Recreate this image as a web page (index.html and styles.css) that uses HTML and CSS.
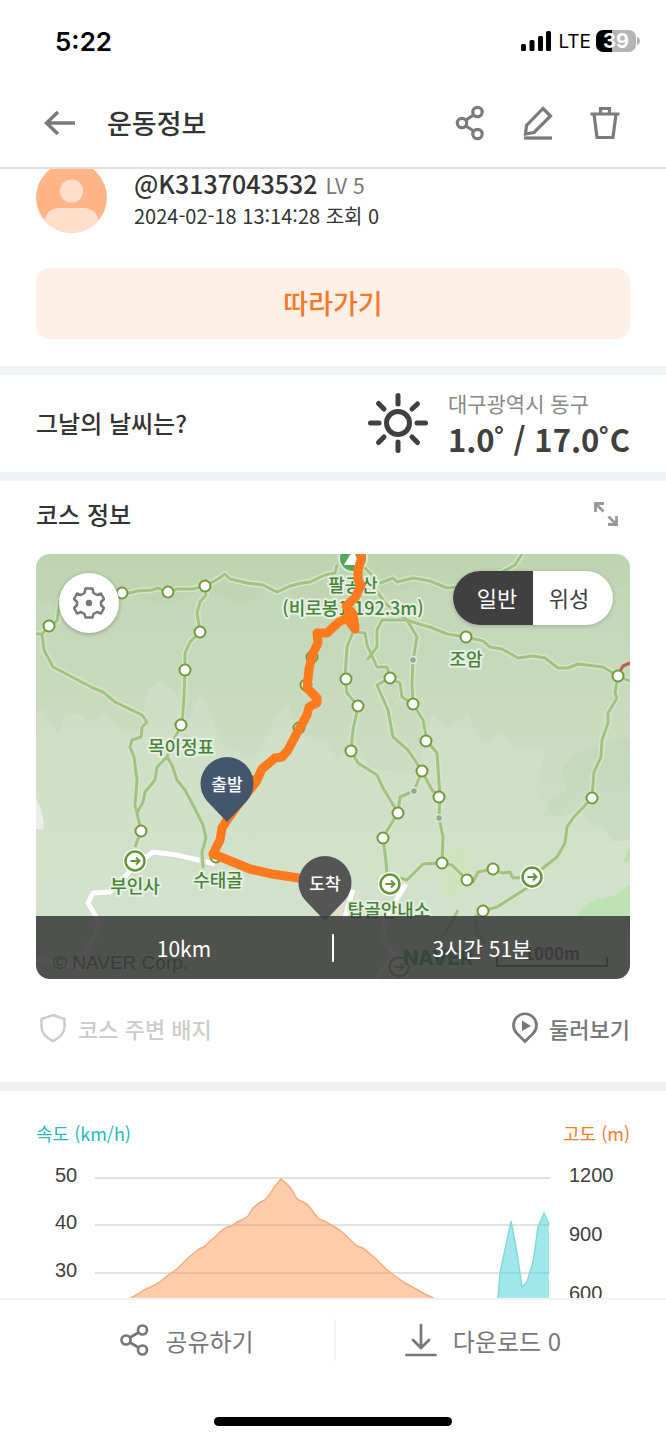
FILE: index.html
```html
<!DOCTYPE html>
<html lang="ko">
<head>
    <meta charset="UTF-8">
    <meta name="viewport" content="width=device-width, initial-scale=1.0">
    <title>운동정보</title>
    <link rel="stylesheet" href="styles.css">
</head>
<body>
    <div class="status-bar">
        <span class="time">5:22</span>
        <div class="status-icons">
            <svg width="31" height="20" viewBox="0 0 31 20">
                <rect x="0" y="13" width="5" height="7" rx="1.5"/>
                <rect x="8.500" y="9" width="5" height="11" rx="1.500"/>
                <rect x="17" y="5" width="5" height="15" rx="1.5"/>
                <rect x="25" y="0" width="5" height="20" rx="1.5"/>
            </svg>
            <span class="network">LTE</span>
            <div class="battery">39</div>
            <svg class="battery-tip" width="3" height="8" viewBox="0 0 3 8"><path d="M0 0C4 1 4 7 0 8Z" fill="#b5b5b5"/></svg>
        </div>
    </div>

    <header class="header">
        <button class="icon-btn" aria-label="뒤로">
            <svg width="32" height="32" viewBox="0 0 32 32"><path d="M14 5L2.500 16L14 27M3 16H31" stroke-width="3.500"/></svg>
        </button>
        <h1>운동정보</h1>
        <div class="header-actions">
            <button class="icon-btn" aria-label="공유">
                <svg width="32" height="36" viewBox="0 0 32 36"><g stroke-width="3.200"><circle cx="7" cy="18" r="4.700"/><circle cx="22.500" cy="7" r="4.700"/><circle cx="22.500" cy="29" r="4.700"/><path d="M11 15L18.500 10M11 21L18.500 26"/></g></svg>
            </button>
            <button class="icon-btn" aria-label="수정">
                <svg width="32" height="36" viewBox="0 0 32 36"><g stroke-width="3.200"><path d="M21 3.500L28.500 11L12 27.500L3.500 29L4.500 20.500Z"/><path d="M2 33H30"/></g></svg>
            </button>
            <button class="icon-btn" aria-label="삭제">
                <svg width="32" height="36" viewBox="0 0 32 36"><g stroke-width="3.200"><path d="M1.500 9H30.500M11.500 9V3.500H20.500V9M5 9L8 32.500H24L27 9"/></g></svg>
            </button>
        </div>
    </header>

    <main class="content">
        <section class="intro">
            <div class="profile">
                <svg width="71" height="64" viewBox="0 7 71 64">
                    <defs><clipPath id="face"><circle cx="35.500" cy="35.500" r="35.500"/></clipPath></defs>
                    <g clip-path="url(#face)">
                        <rect width="71" height="71" fill="#ffb587"/>
                        <circle cx="35.500" cy="29" r="11.500" fill="#ffdfcb"/>
                        <path d="M8 74V60Q11 46 23 46H48Q60 46 63 60V74Z" fill="#ffdfcb"/>
                    </g>
                </svg>
                <div>
                    <div class="user"><strong>@K3137043532</strong> <span>LV 5</span></div>
                    <div class="date">2024-02-18 13:14:28 조회 0</div>
                </div>
            </div>
            <button class="follow">따라가기</button>
        </section>

        <section class="weather">
            <h2>그날의 날씨는?</h2>
            <svg width="62" height="62" viewBox="0 0 62 62">
                <g fill="none" stroke="#404040" stroke-width="5" stroke-linecap="round">
                    <circle cx="31" cy="31" r="11.500"/>
                    <path d="M31 3.500V12M31 50V58.500M3.500 31H12M50 31H58.500M11.500 11.500L17 17M45 45L50.500 50.500M50.500 12L45 17M17 45L11.500 50.500"/>
                </g>
            </svg>
            <div>
                <div class="place">대구광역시 동구</div>
                <div class="temp">1.0˚ / 17.0˚C</div>
            </div>
        </section>

        <section class="course">
            <div class="course-head">
                <h2>코스 정보</h2>
                <button class="icon-btn expand" aria-label="확대">
                    <svg width="24" height="24" viewBox="0 0 24 24"><path d="M1.500 10V1.500H10M2 2L9.500 9.500M22.500 14V22.500H14M22 22L14.500 14.500" stroke-width="2.800"/></svg>
                </button>
            </div>
            <div class="map">
                <svg class="map-canvas" viewBox="0 0 594 425">
                    <defs>
                        <linearGradient id="land" x1="0" y1="0" x2="0" y2="1">
                            <stop offset="0" stop-color="#c2d6b6"/>
                            <stop offset="0.400" stop-color="#cadbc0"/>
                            <stop offset="1" stop-color="#d6e5d1"/>
                        </linearGradient>
                        <g id="stop"><circle r="5.500" fill="#fff" stroke="#719a3d" stroke-width="2"/></g>
                        <g id="gate"><circle r="12" fill="#fff"/><circle r="9.500" fill="#fff" stroke="#65963b" stroke-width="2.500"/><path d="M-4.500 0H4M1 -3.500L4.500 0L1 3.500" fill="none" stroke="#65963b" stroke-width="2"/></g>
                    </defs>
                    <rect width="594" height="425" fill="url(#land)"/>
                    <!-- terrain -->
                    <g fill="#d2e1ca" opacity="0.700">
                        <path d="M0 160L8 155L14 168L22 180L30 158L42 160L55 168L68 158L80 172L104 180L112 135L125 126L140 140L150 170L164 140L175 160L185 190L220 205L236 170L252 150L262 180L290 186L300 205L322 190L335 215L380 220L396 160L410 175L432 160L446 190L465 177L480 195L510 192L500 240L520 265L545 235L594 238V362H0Z"/>
                    </g>
                    <g fill="#b7cead" opacity="0.250">
                        <path d="M0 0H594V30L570 38L540 26L505 44L470 20L430 44L400 24L360 38L310 34L280 52L240 30L205 50L170 34L130 52L90 40L50 62L0 46Z"/>
                        <path d="M508 262L516 244L530 238L526 214L540 200L562 190L594 184V285L578 288L565 270L556 272L544 256L528 262Z"/>
                    </g>
                    <path d="M540 362L552 349L580 341L594 331V380H540ZM588 305L594 292V308H588Z" fill="#bfe2b5"/>
                    <path d="M410 300Q425 285 434 308Q430 350 407 342Q402 325 410 300Z" fill="#cfe4bd"/>
                    <path d="M0 244Q10 265 7 275H0Z" fill="#ececea"/>
                    <path d="M300 345L324 336L320 372L298 372Z" fill="#e2dfcc"/>
                    <g class="road">
                        <path class="road-edge" d="M179 310L141 301L117 298L99 312L74 338L57 339L52 349L62 366L61 380L52 391L44 414L0 405M317 336L308 366M370 330L350 362L346 385L358 400L340 425"/>
                        <path d="M179 310L141 301L117 298L99 312L74 338L57 339L52 349L62 366L61 380L52 391L44 414L0 405M317 336L308 366M370 330L350 362L346 385L358 400L340 425"/>
                    </g>
                    <!-- trails -->
                    <defs>
                        <g id="trails">
                            <path d="M0 80L6 80L13 72L21 67L24 46L50 40L86 39L94 39L101 37L116 36L122 34L132 38L141 35L157 35L169 32L182 25L189 20L194 25L211 29L227 31L241 38L254 32L266 29L274 28L289 21L299 19L301 11"/>
                            <path d="M169 32L170 41L164 48L161 59L164 78L154 88L149 99L149 116L148 143L146 171L139 183L131 203L121 213L119 226L109 238L107 248L101 259L105 277L99 293M131 203L136 211L141 226L149 236L157 251L167 271L170 284L166 298L167 314"/>
                            <path d="M6 80L8 96L17 113L57 134L67 138L79 148L106 161L111 168L106 173L105 183L96 186L94 193L98 203L101 226L99 251L101 259"/>
                            <path d="M325 10L336 21L336 28L344 29L357 24L361 28L377 24L394 27L411 34L421 33M450 25L466 18L479 11L486 0"/>
                            <path d="M336 31L350 50L371 66M331 106L341 93L341 76L346 66L371 66L386 71L394 73L411 80L430 83L447 87L454 93L466 95L482 104L497 102L509 104L522 114L532 114L542 110L567 113L582 122L594 127"/>
                            <path d="M582 122L579 139L581 144L572 159L572 169L566 186L565 203L558 218L556 244L537 264L531 273L529 289L521 303L507 314L496 323L491 334L461 353L447 357L439 363L441 380L450 390"/>
                            <path d="M317 78L311 93L309 124L311 139L322 152L317 176L315 197L322 209L341 221L347 234L362 259L347 283L350 308L352 330"/>
                            <path d="M319 78L329 79L331 91L341 113L351 113L354 124L341 131L352 156L357 183L372 196L386 217L378 237L364 243L362 259M354 124L364 129L366 143L377 150L387 166L391 187L401 199L404 243L403 264L407 283L406 309M371 66L381 83L377 106L376 129L377 150M386 217L396 236L404 243"/>
                            <path d="M354 330L364 324L371 326L387 310L406 309L416 311L431 326L437 328L442 318L457 315L466 319L474 318L477 324L496 323M422 356L416 368L405 385"/>
                        </g>
                    </defs>
                    <use class="trail-edge" href="#trails"/>
                    <use class="trail" href="#trails"/>
                    <path d="M583 119L587 112L594 109" fill="none" stroke="#bd5c55" stroke-width="3"/>
                    <g fill="#91ab91" stroke="#dde8d7" stroke-width="1.500">
                        <circle cx="377" cy="106" r="3.500"/><circle cx="378" cy="237" r="3.500"/><circle cx="403" cy="264" r="3.500"/>
                    </g>
                    <use href="#stop" x="13" y="72"/><use href="#stop" x="86" y="39"/><use href="#stop" x="132" y="38"/><use href="#stop" x="169" y="32"/>
                    <use href="#stop" x="164" y="78"/><use href="#stop" x="149" y="116"/><use href="#stop" x="145" y="171"/><use href="#stop" x="105" y="277"/>
                    <use href="#stop" x="276" y="103"/><use href="#stop" x="270" y="131"/><use href="#stop" x="263" y="174"/><use href="#stop" x="217" y="228"/><use href="#stop" x="180" y="303"/>
                    <use href="#stop" x="310" y="125"/><use href="#stop" x="322" y="152"/><use href="#stop" x="315" y="197"/><use href="#stop" x="354" y="124"/>
                    <use href="#stop" x="377" y="150"/><use href="#stop" x="390" y="187"/><use href="#stop" x="386" y="217"/><use href="#stop" x="403" y="243"/>
                    <use href="#stop" x="362" y="259"/><use href="#stop" x="347" y="284"/><use href="#stop" x="406" y="309"/><use href="#stop" x="431" y="326"/>
                    <use href="#stop" x="457" y="315"/><use href="#stop" x="447" y="357"/><use href="#stop" x="430" y="83"/><use href="#stop" x="582" y="122"/><use href="#stop" x="556" y="244"/>
                    <use href="#gate" x="99" y="307"/><use href="#gate" x="354" y="330"/><use href="#gate" x="496" y="323"/><use href="#gate" x="363" y="413"/>
                    <circle cx="317" cy="4" r="14" fill="#57a759" stroke="#dbe8d4" stroke-width="2"/>
                    <path d="M308 11L317 -4L324 11Z" fill="#fff"/>
                    <g class="map-label">
                        <text x="317" y="38">팔공산</text>
                        <text x="317" y="61">(비로봉1,192.3m)</text>
                        <text x="145" y="200">목이정표</text>
                        <text x="430" y="112">조암</text>
                        <text x="99" y="339">부인사</text>
                        <text x="182" y="333">수태골</text>
                        <text x="353" y="363">탑골안내소</text>
                    </g>
                    <text class="copyright" x="17" y="415">© NAVER Corp.</text>
                    <text class="naver" x="367" y="411">NAVER</text>
                    <text class="scale" x="488" y="406">1000m</text>
                    <path d="M461 403V412H571V403" fill="none" stroke="#333" stroke-width="2"/>
                    <!-- route -->
                    <path class="route" d="M325 0L325 6L322 16L322 26L325 31L319 44L310 52L317 60L319 75L311 64L303 68L291 79L281 79L282 89L277 99L273 115L271 134L281 144L281 149L273 153L271 161L261 179L252 196L246 203L239 204L226 215L220 228L204 248L191 266L186 274L184 286L177 300L197 308L214 315L236 320L289 328L289 363"/>
                    <path d="M312 52L324 72L314 74L306 62Z" fill="#ff7a1c"/>
                    <!-- pins -->
                    <path d="M191 268L171 247A26.500 26.500 0 1 1 211 247Z" fill="#44566c"/>
                    <path d="M289 367L269 346A26.500 26.500 0 1 1 309 346Z" fill="#555"/>
                    <text class="pin-label" x="191" y="237">출발</text>
                    <text class="pin-label" x="289" y="336">도착</text>
                </svg>
                <button class="map-setting" aria-label="지도 설정">
                    <svg width="32" height="32" viewBox="0 0 32 32"><path d="M12.500 1.500H19.500L20.500 6L24 8L28 6.500L31 12L28 15V18L31 21L28 26.500L24 25L20.500 27L19.500 30.500H12.500L11.500 27L8 25L4 26.500L1 21L4 18V15L1 12L4 6.500L8 8L11.500 6Z" fill="none" stroke="#777" stroke-width="2.500" stroke-linejoin="round"/><circle cx="16" cy="16" r="3.200" fill="#777"/></svg>
                </button>
                <div class="map-type">
                    <button class="active">일반</button>
                    <button>위성</button>
                </div>
                <div class="map-info">
                    <span>10km</span>
                    <span>3시간 51분</span>
                </div>
            </div>
            <div class="course-links">
                <button class="link-btn disabled" disabled>
                    <svg width="34" height="30" viewBox="0 0 34 30"><path d="M17 2L28.500 6V14Q28 23 17 28Q6 23 5.500 14V6Z" fill="none" stroke="currentColor" stroke-width="2.500"/></svg>
                    코스 주변 배지
                </button>
                <button class="link-btn">
                    <svg width="28" height="32" viewBox="0 0 28 32"><path d="M14 29.500L6 21.500A11.500 11.500 0 1 1 22 21.500Z" fill="none" stroke="currentColor" stroke-width="2.700"/><path d="M11 8.500L20 14L11 19Z" fill="currentColor"/></svg>
                    둘러보기
                </button>
            </div>
        </section>

        <section class="graph">
            <div class="graph-head">
                <span class="speed">속도 (km/h)</span>
                <span class="altitude">고도 (m)</span>
            </div>
            <svg class="chart" viewBox="0 0 594 200">
                <path d="M59 31H514M59 78H514M59 126H514M59 173H514" stroke="#e2e2e2" stroke-width="2"/>
                <path d="M82 200V160L95 151L102 147L108 143L117 139L124 135L131 129L141 122L152 111L163 102L168 100L174 94L179 90L185 84L191 80L196 79L201 75L206 73L212 69L217 61L223 56L229 53L234 47L239 39L245 32L251 37L256 43L261 52L267 55L272 58L278 66L283 72L288 74L297 79L305 84L321 99L327 101L339 111L350 122L355 126L369 136L380 142L389 147L397 151L410 158V200Z" fill="#ff8030" fill-opacity="0.400" stroke="#f8ac79" stroke-width="1.500"/>
                <path d="M458 200L462 151L464 126L475 74L480 100L484 126L486 140L491 135L497 115L502 80L508 66L513 77V200Z" fill="#45d1d5" fill-opacity="0.500"/>
                <path d="M458 200L462 151L464 126L475 74L480 100L484 126L486 140L491 135L497 115L502 80L508 66L513 77" fill="none" stroke="#83d9dc" stroke-width="1.500"/>
                <g class="axis">
                    <text x="19" y="35">50</text>
                    <text x="19" y="82">40</text>
                    <text x="19" y="130">30</text>
                    <text x="533" y="35">1200</text>
                    <text x="533" y="94">900</text>
                    <text x="533" y="153">600</text>
                </g>
            </svg>
        </section>
    </main>

    <footer class="footer">
        <div class="footer-actions">
            <button class="footer-btn">
                <svg width="29" height="32" viewBox="0 0 29 32"><g fill="none" stroke="currentColor" stroke-width="2.700"><circle cx="6" cy="16" r="4.500"/><circle cx="22.500" cy="6" r="4.500"/><circle cx="22.500" cy="26" r="4.500"/><path d="M10 13.500L18.500 8.500M10 18.500L18.500 23.500"/></g></svg>
                공유하기
            </button>
            <button class="footer-btn">
                <svg width="32" height="34" viewBox="0 0 32 34"><path d="M16 2V25M8 17L16 25L24 17M1.500 32H30.500" fill="none" stroke="currentColor" stroke-width="2.700" stroke-linecap="round"/></svg>
                다운로드 0
            </button>
        </div>
        <div class="home-bar"></div>
    </footer>

    <script>
        // 일반 / 위성 전환
        var types = document.querySelectorAll('.map-type button');
        types.forEach(function(btn) {
            btn.addEventListener('click', function() {
                types.forEach(function(b) { b.classList.remove('active'); });
                btn.classList.add('active');
            });
        });
    </script>
</body>
</html>
```
FILE: styles.css
```css
* {
    box-sizing: border-box;
}

body {
    margin: 0;
    height: 100vh;
    display: flex;
    flex-direction: column;
    background-color: #fff;
    color: #333;
    font-family: "Noto Sans CJK KR", sans-serif;
    overflow: hidden;
}

button {
    font-family: inherit;
    border: none;
    background: none;
    padding: 0;
    color: inherit;
    cursor: pointer;
}

h1, h2 {
    margin: 0;
    font-weight: 500;
}

h2 {
    font-size: 24px;
    line-height: 32px;
}

svg {
    display: block;
    flex-shrink: 0;
}

.status-bar {
    height: 82px;
    padding: 0 26px 0 55px;
    display: flex;
    align-items: center;
    justify-content: space-between;
    color: #000;
    font-family: Inter, sans-serif;
}

.time {
    font-size: 26px;
    font-weight: 600;
}

.status-icons {
    display: flex;
    align-items: center;
}

.network {
    font-size: 19px;
    margin: 0 5px 0 6px;
}

.battery {
    width: 40px;
    height: 22px;
    border-radius: 7px;
    background: linear-gradient(to right, #000 39%, #b5b5b5 39%);
    color: #fff;
    font-size: 20px;
    line-height: 22px;
    font-weight: 700;
    text-align: center;
}

.battery-tip {
    margin-left: 1px;
}

.header {
    height: 87px;
    padding: 0 45px 4px 44px;
    display: flex;
    align-items: center;
    border-bottom: 2px solid #e0e0e0;
}

.header h1 {
    flex: 1;
    margin-left: 31px;
    font-size: 27px;
    line-height: 36px;
}

.header-actions {
    display: flex;
    gap: 35px;
}

.icon-btn svg {
    fill: none;
    stroke: #7b7b7b;
}

.content {
    flex: 1;
    min-height: 0;
    overflow: hidden;
}

.content section {
    padding-left: 36px;
    padding-right: 36px;
    border-bottom: 9px solid #f1f2f4;
}

.intro {
    padding-bottom: 27px;
}

.profile {
    height: 64px;
    display: flex;
    gap: 27px;
    margin-bottom: 35px;
}

.user {
    display: flex;
    align-items: baseline;
    gap: 8px;
    height: 31px;
    font-size: 21px;
    line-height: 28px;
    color: #777;
}

.user strong {
    font-size: 25px;
    font-weight: 500;
    color: #333;
}

.date {
    font-size: 20px;
    line-height: 32px;
}

.follow {
    width: 100%;
    height: 71px;
    padding-bottom: 2px;
    border-radius: 14px;
    background-color: #fff0e7;
    color: #f47a2a;
    font-size: 27px;
    font-weight: 500;
}

.weather {
    height: 106px;
    padding-bottom: 2px;
    display: flex;
    align-items: center;
    gap: 19px;
}

.weather h2 {
    flex: 1;
}

.place {
    font-size: 21px;
    line-height: 32px;
    color: #888;
}

.temp {
    font-size: 31px;
    line-height: 40px;
    font-weight: 700;
    color: #404040;
}

.course-head {
    height: 73px;
    padding-bottom: 8px;
    display: flex;
    align-items: center;
    justify-content: space-between;
}

.expand {
    margin-right: 12px;
}

.expand svg {
    stroke: #999;
}

.map {
    position: relative;
    border-radius: 14px;
    overflow: hidden;
}

.map-canvas {
    width: 100%;
    height: auto;
}

.trail, .trail-edge {
    fill: none;
    stroke: #a1c282;
    stroke-width: 3;
    stroke-linejoin: round;
}

.trail-edge {
    stroke: #d5e5c8;
    stroke-width: 6;
}

.road path {
    fill: none;
    stroke: #fff;
    stroke-width: 5;
    stroke-linejoin: round;
}

.road .road-edge {
    stroke: #d4d9d0;
    stroke-width: 7;
}

.route {
    fill: none;
    stroke: #ff7a1c;
    stroke-width: 9;
    stroke-linejoin: round;
}

.map-label text {
    font-size: 18px;
    font-weight: 500;
    text-anchor: middle;
    fill: #47833b;
    stroke: #e6f0e1;
    stroke-width: 4px;
    stroke-linejoin: round;
    paint-order: stroke;
}

.pin-label {
    font-size: 17px;
    font-weight: 500;
    text-anchor: middle;
    fill: #fff;
}

.copyright {
    font-family: "Liberation Sans", sans-serif;
    font-size: 19px;
    fill: #333;
}

.naver {
    font-family: Inter, sans-serif;
    font-size: 20px;
    font-weight: 800;
    fill: #008845;
}

.scale {
    font-family: "Liberation Sans", sans-serif;
    font-size: 18px;
    font-weight: 700;
    fill: #333;
}

.map-setting {
    position: absolute;
    left: 23px;
    top: 19px;
    width: 60px;
    height: 60px;
    border-radius: 50%;
    background-color: #fff;
    display: flex;
    align-items: center;
    justify-content: center;
    box-shadow: 0 1px 4px rgba(0, 0, 0, 0.3);
}

.map-type {
    position: absolute;
    right: 17px;
    top: 17px;
    width: 160px;
    height: 54px;
    display: flex;
    border-radius: 27px;
    overflow: hidden;
    background-color: #fff;
    box-shadow: 0 1px 4px rgba(0, 0, 0, 0.2);
}

.map-type button {
    flex: 1;
    padding: 0 8px 2px 0;
    font-size: 22px;
    color: #404040;
}

.map-type .active {
    padding: 0 0 2px 8px;
    background-color: #404040;
    color: #fff;
}

.map-info {
    position: absolute;
    left: 0;
    right: 0;
    bottom: 0;
    height: 63px;
    display: flex;
    align-items: center;
    background-color: rgba(60, 60, 60, 0.88);
    color: #fff;
    font-size: 21px;
}

.map-info span {
    flex: 1;
    text-align: center;
    line-height: 28px;
}

.map-info span + span {
    border-left: 2px solid #fff;
}

.course-links {
    height: 103px;
    padding-bottom: 6px;
    display: flex;
    align-items: center;
    justify-content: space-between;
}

.link-btn {
    display: flex;
    align-items: center;
    gap: 10px;
    font-size: 22px;
    line-height: 30px;
    font-weight: 500;
    color: #777;
}

.link-btn.disabled {
    gap: 8px;
    color: #ccc;
}

.graph {
    padding-top: 28px;
}

.graph-head {
    display: flex;
    justify-content: space-between;
    font-size: 18px;
    line-height: 28px;
}

.speed {
    color: #25b9c1;
}

.altitude {
    color: #f47a2a;
}

.chart {
    width: 100%;
    height: auto;
}

.axis {
    font-family: "Liberation Sans", sans-serif;
    font-size: 20px;
    fill: #404040;
}

.footer {
    height: 142px;
    border-top: 2px solid #f1f2f4;
    display: flex;
    flex-direction: column;
    align-items: center;
    justify-content: space-between;
    padding-bottom: 14px;
}

.footer-actions {
    width: 100%;
    height: 80px;
    padding: 19px 36px 19px 40px;
    display: flex;
}

.footer-btn {
    flex: 1;
    display: flex;
    align-items: center;
    justify-content: center;
    gap: 16px;
    font-size: 24px;
    color: #777;
}

.footer-btn + .footer-btn {
    border-left: 2px solid #f1f2f4;
}

.home-bar {
    width: 238px;
    height: 9px;
    border-radius: 5px;
    background-color: #000;
}
```
